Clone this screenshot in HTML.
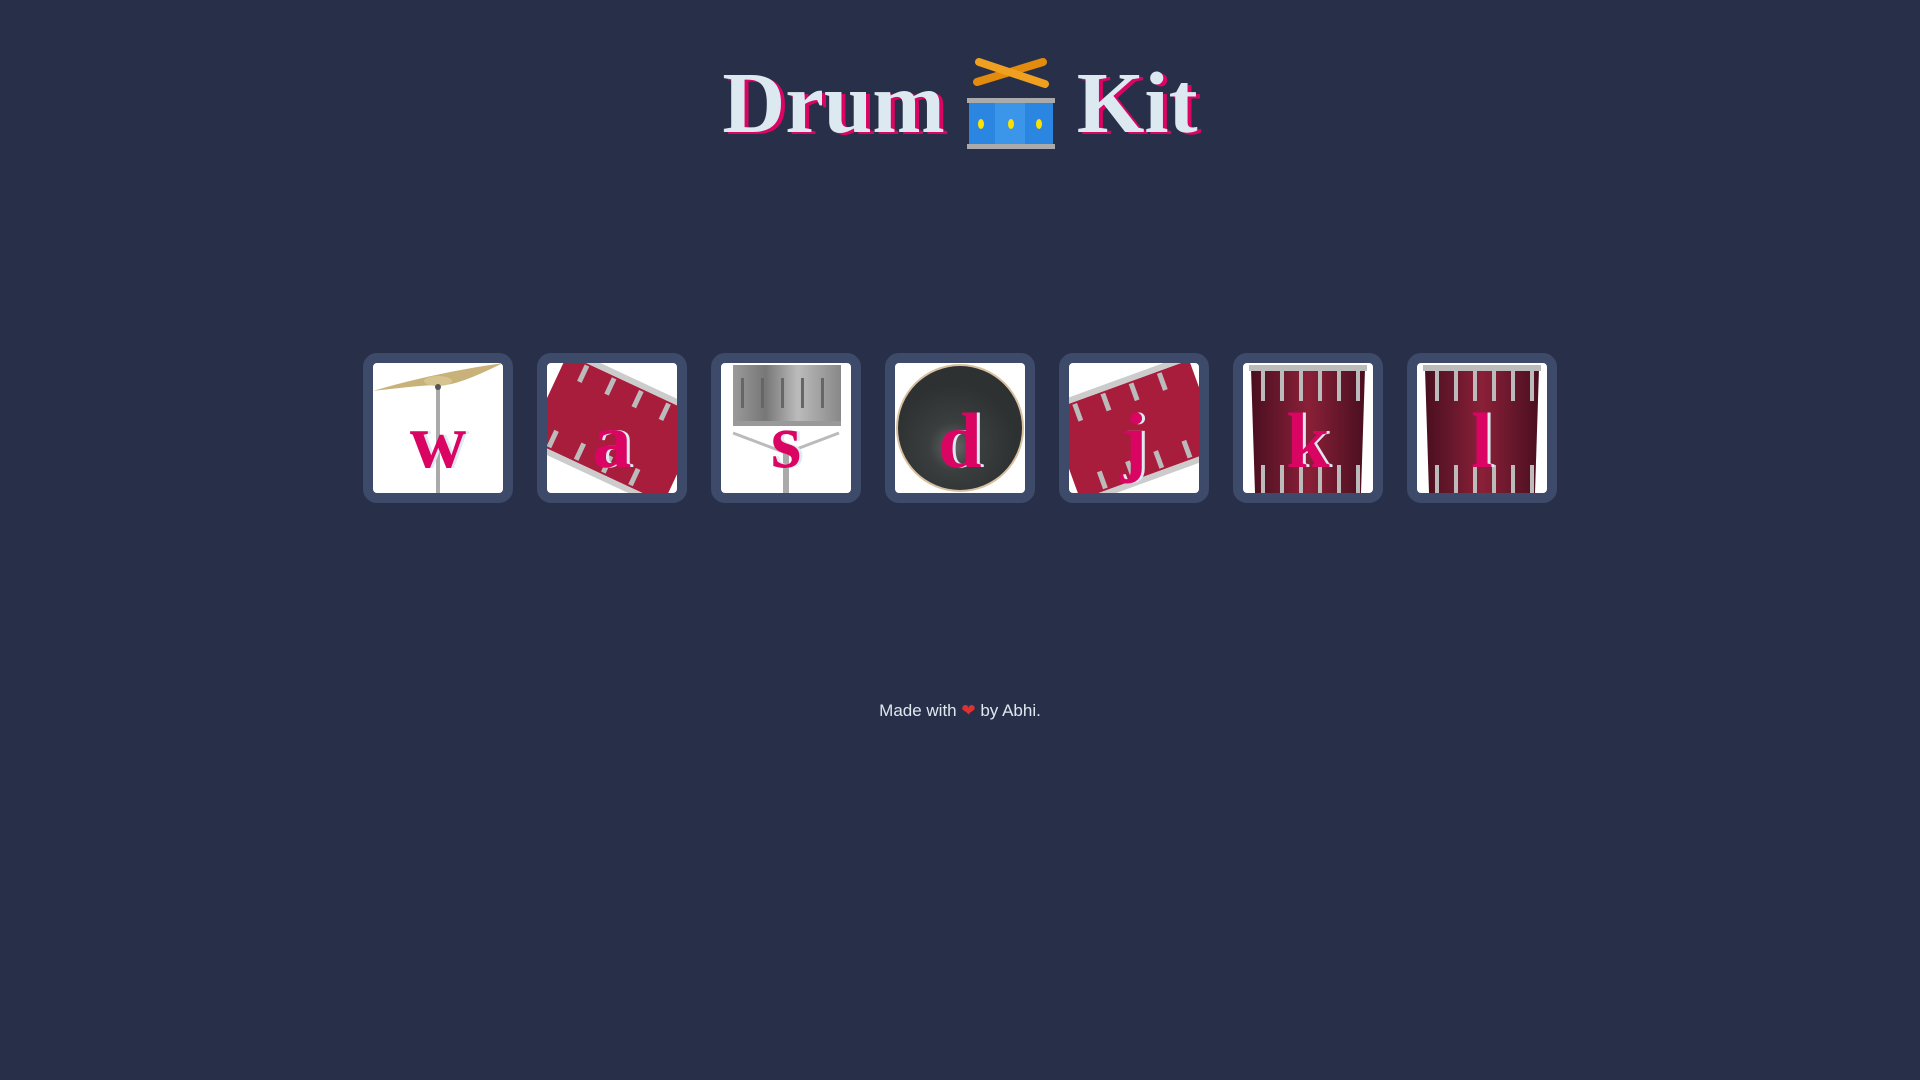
<!DOCTYPE html>
<html><head><meta charset="utf-8"><style>
html,body{margin:0;padding:0;width:1920px;height:1080px;background:#283049;overflow:hidden}
h1{position:absolute;left:0;top:48px;width:1920px;margin:0;text-align:center;font-family:"Liberation Serif",serif;font-weight:bold;font-size:87px;color:#dde9f0;text-shadow:4px 2px 0 #da0463;line-height:110px}
.emo{display:inline-block;width:92px;height:92px;vertical-align:-18px;margin:0 20px}
.row{position:absolute;left:363px;top:353px;display:flex;gap:24px}
.btn{width:130px;height:130px;border:10px solid #3e4a69;border-radius:14px;background:#fff;position:relative;overflow:hidden}
.btn svg{position:absolute;left:0;top:0;border-radius:5px}
.btn span{position:absolute;left:0;width:130px;text-align:center;top:38px;font-family:"Liberation Serif",serif;font-weight:bold;font-size:78px;line-height:80px;color:#da0463;text-shadow:3px 0 0 #dde9f0}
.ft{position:absolute;left:0;top:701px;width:1920px;text-align:center;font-family:"Liberation Sans",sans-serif;font-size:17px;color:#dde9f0}
</style></head><body>
<h1>Drum<svg class="emo" viewBox="0 0 92 92"><g stroke-linecap="round"><line x1="12" y1="24" x2="78" y2="4" stroke="#e38b0c" stroke-width="8"/><line x1="14" y1="4" x2="80" y2="26" stroke="#f0a020" stroke-width="8"/></g><rect x="2" y="40" width="88" height="5" fill="#aaa"/><rect x="4" y="45" width="84" height="42" fill="#2a86e0"/><rect x="30" y="45" width="30" height="42" fill="#3b96ea"/><rect x="2" y="86" width="88" height="5" fill="#aaa"/><g fill="#ffe000"><ellipse cx="16" cy="66" rx="3" ry="5"/><ellipse cx="46" cy="66" rx="3" ry="5"/><ellipse cx="74" cy="66" rx="3" ry="5"/></g></svg>Kit</h1>
<div class="row">
<div class="btn"><svg width="130" height="130"><rect x="63" y="20" width="4" height="110" fill="#aaa"/><path d="M0 28 Q60 10 130 0 Q80 25 65 22 Q50 22 0 28Z" fill="#c8b27a"/><ellipse cx="65" cy="18" rx="14" ry="5" fill="#d6c490"/><circle cx="65" cy="24" r="3" fill="#555"/></svg><span>w</span></div>
<div class="btn"><svg width="130" height="130"><g transform="rotate(25 68 62)"><rect x="-5" y="18" width="150" height="94" fill="#a81c3c"/><rect x="-5" y="12" width="150" height="6" fill="#ccc"/><rect x="-5" y="112" width="150" height="6" fill="#ccc"/><g fill="#bbb"><rect x="15" y="20" width="5" height="18"/><rect x="45" y="20" width="5" height="18"/><rect x="75" y="20" width="5" height="18"/><rect x="105" y="20" width="5" height="18"/><rect x="15" y="92" width="5" height="18"/><rect x="45" y="92" width="5" height="18"/><rect x="75" y="92" width="5" height="18"/><rect x="105" y="92" width="5" height="18"/></g></g></svg><span>a</span></div>
<div class="btn"><svg width="130" height="130"><defs><linearGradient id="g1"><stop offset="0" stop-color="#9a9a9a"/><stop offset=".3" stop-color="#777"/><stop offset=".6" stop-color="#bbb"/><stop offset="1" stop-color="#888"/></linearGradient></defs><path d="M12 70 L65 90 L118 70" stroke="#bbb" stroke-width="3" fill="none"/><rect x="62" y="80" width="6" height="50" fill="#aaa"/><rect x="12" y="2" width="108" height="58" fill="url(#g1)"/><rect x="12" y="58" width="108" height="5" fill="#999"/><g fill="#666"><rect x="20" y="15" width="3" height="30"/><rect x="40" y="15" width="3" height="30"/><rect x="60" y="15" width="3" height="30"/><rect x="80" y="15" width="3" height="30"/><rect x="100" y="15" width="3" height="30"/></g></svg><span>s</span></div>
<div class="btn"><svg width="130" height="130"><defs><radialGradient id="g2" cx=".45" cy=".65" r=".5"><stop offset="0" stop-color="#666"/><stop offset=".4" stop-color="#3a3e3e"/><stop offset="1" stop-color="#2d3131"/></radialGradient></defs><circle cx="65" cy="65" r="64" fill="#d8c0a0"/><circle cx="65" cy="65" r="62" fill="url(#g2)"/></svg><span>d</span></div>
<div class="btn"><svg width="130" height="130"><g transform="rotate(-20 65 65)"><rect x="-10" y="20" width="150" height="94" fill="#a81c3c"/><rect x="-10" y="14" width="150" height="6" fill="#ccc"/><rect x="-10" y="114" width="150" height="6" fill="#ccc"/><g fill="#bbb"><rect x="15" y="22" width="5" height="18"/><rect x="45" y="22" width="5" height="18"/><rect x="75" y="22" width="5" height="18"/><rect x="105" y="22" width="5" height="18"/><rect x="15" y="94" width="5" height="18"/><rect x="45" y="94" width="5" height="18"/><rect x="75" y="94" width="5" height="18"/><rect x="105" y="94" width="5" height="18"/></g></g></svg><span>j</span></div>
<div class="btn"><svg width="130" height="130"><defs><linearGradient id="g3"><stop offset="0" stop-color="#4a0f20"/><stop offset=".5" stop-color="#8a2038"/><stop offset="1" stop-color="#4a0f20"/></linearGradient></defs><path d="M8 6 H122 L118 130 H12Z" fill="url(#g3)"/><rect x="6" y="2" width="118" height="6" fill="#bbb"/><g fill="#bbb"><rect x="18" y="8" width="4" height="30"/><rect x="37" y="8" width="4" height="30"/><rect x="56" y="8" width="4" height="30"/><rect x="75" y="8" width="4" height="30"/><rect x="94" y="8" width="4" height="30"/><rect x="113" y="8" width="4" height="30"/><rect x="18" y="102" width="4" height="28"/><rect x="37" y="102" width="4" height="28"/><rect x="56" y="102" width="4" height="28"/><rect x="75" y="102" width="4" height="28"/><rect x="94" y="102" width="4" height="28"/><rect x="113" y="102" width="4" height="28"/></g></svg><span>k</span></div>
<div class="btn"><svg width="130" height="130"><path d="M8 6 H122 L118 130 H12Z" fill="url(#g3)"/><rect x="6" y="2" width="118" height="6" fill="#bbb"/><g fill="#bbb"><rect x="18" y="8" width="4" height="30"/><rect x="37" y="8" width="4" height="30"/><rect x="56" y="8" width="4" height="30"/><rect x="75" y="8" width="4" height="30"/><rect x="94" y="8" width="4" height="30"/><rect x="113" y="8" width="4" height="30"/><rect x="18" y="102" width="4" height="28"/><rect x="37" y="102" width="4" height="28"/><rect x="56" y="102" width="4" height="28"/><rect x="75" y="102" width="4" height="28"/><rect x="94" y="102" width="4" height="28"/><rect x="113" y="102" width="4" height="28"/></g></svg><span>l</span></div>
</div>
<div class="ft">Made with <span style="color:#e0302f">&#10084;</span> by Abhi.</div>
</body></html>
